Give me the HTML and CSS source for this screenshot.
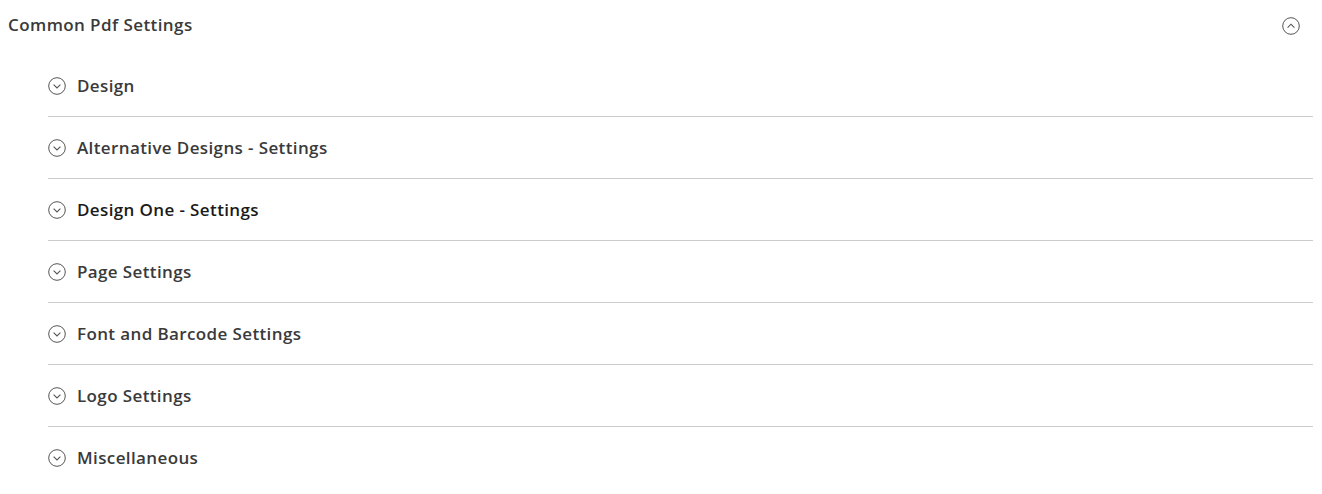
FILE: index.html
```html
<!DOCTYPE html>
<html>
<head>
<meta charset="utf-8">
<link rel="stylesheet" href="styles.css">
</head>
<body>
<div class="section">
  <div class="section-head">
    <span class="section-title">Common Pdf Settings</span>
    <svg class="toggle toggle-head" viewBox="0 0 18 18" width="18" height="18"><circle cx="9" cy="9" r="8.3" fill="none" stroke="#555" stroke-width="1"/><path d="M5.6 10.6 L9 7.2 L12.4 10.6" fill="none" stroke="#555" stroke-width="1.1"/></svg>
  </div>
  <ul class="groups">
    <li class="group"><svg class="toggle" viewBox="0 0 18 18" width="18" height="18"><circle cx="9" cy="9" r="8.3" fill="none" stroke="#555" stroke-width="1"/><path d="M5.6 7.6 L9 11 L12.4 7.6" fill="none" stroke="#555" stroke-width="1.1"/></svg><span class="group-title">Design</span></li>
    <li class="group"><svg class="toggle" viewBox="0 0 18 18" width="18" height="18"><circle cx="9" cy="9" r="8.3" fill="none" stroke="#555" stroke-width="1"/><path d="M5.6 7.6 L9 11 L12.4 7.6" fill="none" stroke="#555" stroke-width="1.1"/></svg><span class="group-title">Alternative Designs - Settings</span></li>
    <li class="group"><svg class="toggle" viewBox="0 0 18 18" width="18" height="18"><circle cx="9" cy="9" r="8.3" fill="none" stroke="#555" stroke-width="1"/><path d="M5.6 7.6 L9 11 L12.4 7.6" fill="none" stroke="#555" stroke-width="1.1"/></svg><span class="group-title dark">Design One - Settings</span></li>
    <li class="group"><svg class="toggle" viewBox="0 0 18 18" width="18" height="18"><circle cx="9" cy="9" r="8.3" fill="none" stroke="#555" stroke-width="1"/><path d="M5.6 7.6 L9 11 L12.4 7.6" fill="none" stroke="#555" stroke-width="1.1"/></svg><span class="group-title">Page Settings</span></li>
    <li class="group"><svg class="toggle" viewBox="0 0 18 18" width="18" height="18"><circle cx="9" cy="9" r="8.3" fill="none" stroke="#555" stroke-width="1"/><path d="M5.6 7.6 L9 11 L12.4 7.6" fill="none" stroke="#555" stroke-width="1.1"/></svg><span class="group-title">Font and Barcode Settings</span></li>
    <li class="group"><svg class="toggle" viewBox="0 0 18 18" width="18" height="18"><circle cx="9" cy="9" r="8.3" fill="none" stroke="#555" stroke-width="1"/><path d="M5.6 7.6 L9 11 L12.4 7.6" fill="none" stroke="#555" stroke-width="1.1"/></svg><span class="group-title">Logo Settings</span></li>
    <li class="group last"><svg class="toggle" viewBox="0 0 18 18" width="18" height="18"><circle cx="9" cy="9" r="8.3" fill="none" stroke="#555" stroke-width="1"/><path d="M5.6 7.6 L9 11 L12.4 7.6" fill="none" stroke="#555" stroke-width="1.1"/></svg><span class="group-title">Miscellaneous</span></li>
  </ul>
</div>
</body>
</html>
```
FILE: styles.css
```css
html, body {
  margin: 0;
  padding: 0;
  background: #ffffff;
}
body {
  font-family: "Open Sans", "Liberation Sans", sans-serif;
  color: #3a3a3a;
}
.section {
  padding: 0 9px 0 8px;
}
.section-head {
  height: 50px;
  display: flex;
  align-items: center;
  justify-content: space-between;
  padding-right: 13px;
}
.section-title {
  font-size: 17px;
  font-weight: 600;
  color: #3a3a3a;
  letter-spacing: 0.42px;
  margin-bottom: 2px;
}
.toggle {
  display: block;
  flex: none;
}
.toggle-head {
  margin-top: 2px;
}
.groups {
  list-style: none;
  margin: 5px 0 0 40px;
  padding: 0;
}
.group {
  height: 61px;
  display: flex;
  align-items: center;
  gap: 11px;
  border-bottom: 1px solid #cccccc;
}
.group.last {
  border-bottom: none;
}
.group-title {
  font-size: 17px;
  font-weight: 600;
  color: #3a3a3a;
  letter-spacing: 0.38px;
}
.group-title.dark {
  color: #1a1a1a;
}
```
